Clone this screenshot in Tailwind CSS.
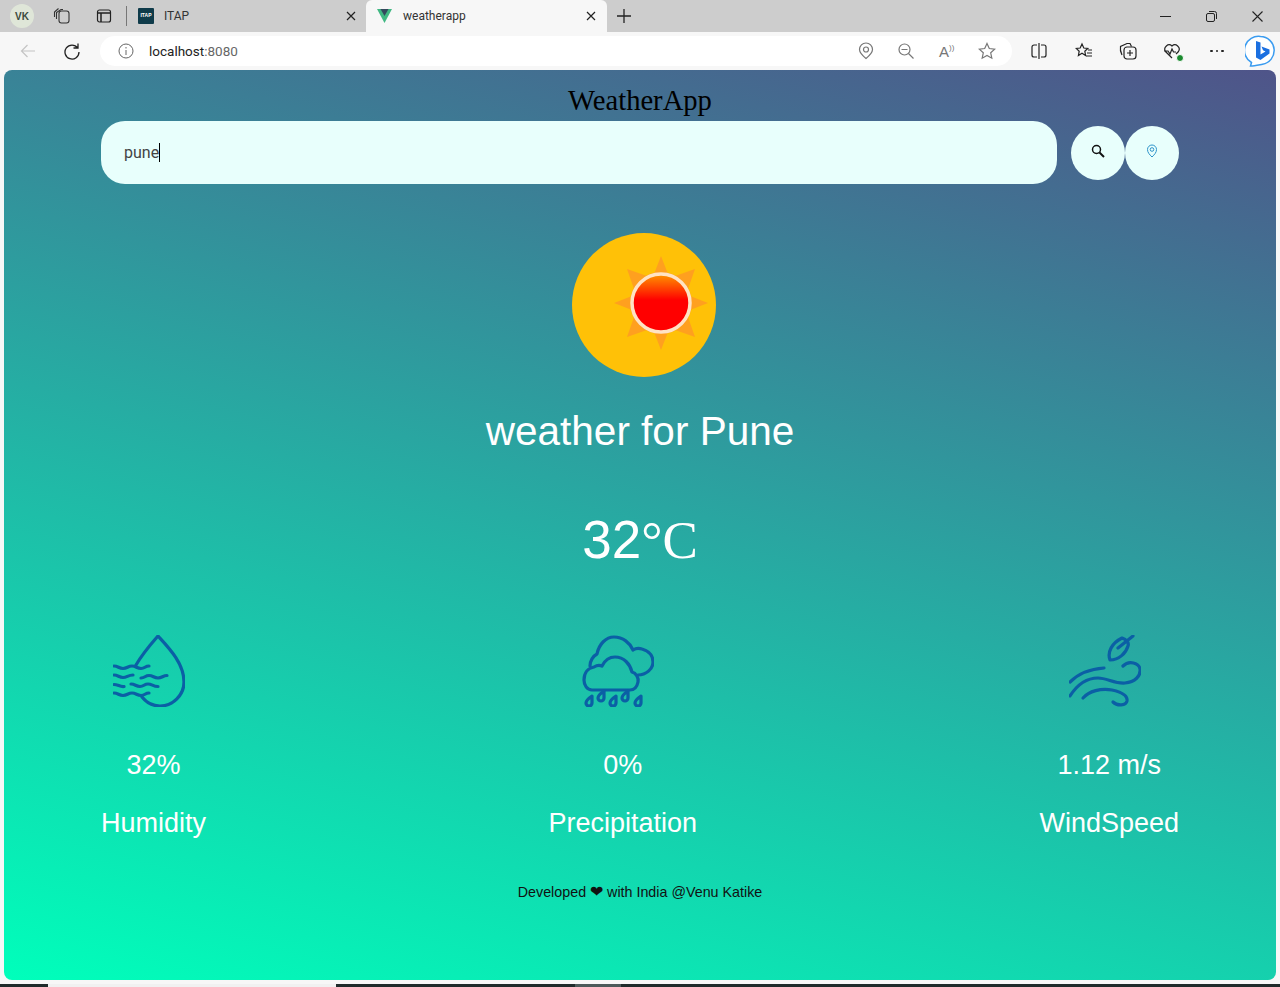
<!DOCTYPE html>
<html lang="en">
<head>
  <meta charset="UTF-8">
  <title>weatherapp</title>
  <script src="https://cdn.jsdelivr.net/npm/@tailwindcss/browser@4"></script>
</head>
<body class="h-[987px] w-[1280px] overflow-hidden bg-[#f7f7f7] font-['Liberation_Sans',sans-serif]">
  <!-- tab strip -->
  <div class="flex h-[32px] items-center bg-[#cdcdcd] text-[#222]">
    <div class="ml-[10px] flex h-[24px] w-[24px] items-center justify-center rounded-full bg-[#dfe6d8] text-[10px] font-bold text-[#3c4a3c]">VK</div>
    <svg class="ml-[19px] h-[18px] w-[18px]" viewBox="0 0 18 18" fill="none" stroke="#333" stroke-width="1.1"><rect x="6" y="4" width="10" height="12" rx="2.5"/><path d="M3.5 12V5.5L8 2.5h2M1.5 10V5l4-3.5"/></svg>
    <svg class="ml-[25px] h-[16px] w-[16px]" viewBox="0 0 16 16" fill="none" stroke="#222" stroke-width="1.2"><rect x="1.5" y="2" width="13" height="12" rx="2"/><path d="M1.5 5h13M5 5v9" stroke-width="1.5"/></svg>
    <div class="ml-[14px] h-[20px] w-px bg-[#777]"></div>
    <div class="ml-[11px] flex h-[16px] w-[16px] items-center justify-center rounded-[1px] bg-[#0f3b4a] text-[5px] font-bold text-white">ITAP</div>
    <span class="ml-[10px] w-[182px] font-['Roboto',sans-serif] text-[12px] text-[#333]">ITAP</span>
    <svg class="h-[10px] w-[10px]" viewBox="0 0 10 10" stroke="#222" stroke-width="1.2"><path d="M1 1l8 8M9 1l-8 8"/></svg>
    <div class="ml-[10px] flex h-[32px] w-[241px] items-center rounded-t-[6px] bg-[#f7f7f7]">
      <svg class="ml-[11px] h-[14px] w-[15px]" viewBox="0 0 15 14"><path d="M0 0h15L7.500 14z" fill="#41b883"/><path d="M3.500 0h8L7.500 7z" fill="#35495e"/></svg>
      <span class="ml-[11px] w-[183px] font-['Roboto',sans-serif] text-[12px] text-[#333]">weatherapp</span>
      <svg class="h-[10px] w-[10px]" viewBox="0 0 10 10" stroke="#222" stroke-width="1.2"><path d="M1 1l8 8M9 1l-8 8"/></svg>
    </div>
    <svg class="ml-[10px] h-[14px] w-[14px]" viewBox="0 0 14 14" stroke="#222" stroke-width="1.3"><path d="M7 0v14M0 7h14"/></svg>
    <div class="ml-auto flex items-center">
      <div class="h-px w-[11px] bg-[#222]"></div>
      <svg class="ml-[35px] h-[11px] w-[11px]" viewBox="0 0 11 11" fill="none" stroke="#222"><rect x=".5" y="2.500" width="8" height="8" rx="1.500"/><path d="M3 .5h5.500a2 2 0 0 1 2 2V8"/></svg>
      <svg class="ml-[35px] mr-[17px] h-[11px] w-[11px]" viewBox="0 0 11 11" stroke="#222" stroke-width="1.1"><path d="M.5.5l10 10M10.500.5l-10 10"/></svg>
    </div>
  </div>
  <!-- address bar -->
  <div class="flex h-[38px] items-center bg-[#f7f7f7]">
    <svg class="ml-[20px] h-[16px] w-[16px]" viewBox="0 0 16 16" fill="none" stroke="#c4c4c4" stroke-width="1.2"><path d="M15 8H1.500M7.500 2l-6 6 6 6"/></svg>
    <svg class="ml-[27px] h-[18px] w-[18px]" viewBox="0 0 18 18" fill="none" stroke="#222" stroke-width="1.3"><path d="M14.700 6A7 7 0 1 0 16 10M15 1.500V6h-4.500"/></svg>
    <div class="ml-[19px] flex h-[30px] w-[912px] items-center rounded-full bg-white">
      <svg class="ml-[18px] h-[16px] w-[16px]" viewBox="0 0 16 16" fill="none" stroke="#666"><circle cx="8" cy="8" r="7"/><path d="M8 7v5M8 4v1.500"/></svg>
      <span class="ml-[15px] font-['Roboto',sans-serif] text-[13.500px] text-[#222]">localhost<span class="text-[#666]">:8080</span></span>
      <div class="ml-auto flex items-center">
        <svg class="h-[18px] w-[18px]" viewBox="0 0 18 18" fill="none" stroke="#777" stroke-width="1.200"><path d="M9 16.500C6 14 2.500 11 2.500 7.500a6.500 6.500 0 0 1 13 0C15.500 11 12 14 9 16.500z"/><circle cx="9" cy="7.500" r="2.500"/></svg>
        <svg class="ml-[23px] h-[16px] w-[16px]" viewBox="0 0 16 16" fill="none" stroke="#777" stroke-width="1.200"><circle cx="6.500" cy="6.500" r="5.500"/><path d="M3.500 6.500h6M10.500 10.500l5 5"/></svg>
        <span class="ml-[25px] w-[16px] text-[15px] leading-none text-[#777]">A<span class="align-top text-[8px]">))</span></span>
        <svg class="ml-[23px] mr-[16px] h-[18px] w-[18px]" viewBox="0 0 18 18" fill="none" stroke="#777" stroke-width="1.200"><path d="M9 1.500l2.300 5 5.400.6-4 3.700 1.100 5.400L9 13.500l-4.800 2.700 1.100-5.400-4-3.700 5.400-.6z"/></svg>
      </div>
    </div>
    <svg class="ml-[19px] h-[16px] w-[16px]" viewBox="0 0 16 16" fill="none" stroke="#222" stroke-width="1.200"><path d="M6 2H3a2 2 0 0 0-2 2v8a2 2 0 0 0 2 2h3M10 2h3a2 2 0 0 1 2 2v8a2 2 0 0 1-2 2h-3M8 0v16"/></svg>
    <svg class="ml-[28px] h-[18px] w-[18px]" viewBox="0 0 18 18" fill="none" stroke="#222" stroke-width="1.200"><path d="M7 2l1.800 4 4 .4-3 2.800.8 4.300L7 11.300l-3.600 2.200.8-4.300-3-2.800 4-.4zM13 8h4M12 11h5M11 14h6"/></svg>
    <svg class="ml-[26px] h-[18px] w-[18px]" viewBox="0 0 18 18" fill="none" stroke="#222" stroke-width="1.200"><rect x="5" y="5" width="12" height="12" rx="3"/><path d="M11 8v6M8 11h6M3 13C1.500 10 1 7 1.500 4.500L8 1.500h3l1.500 3"/></svg>
    <div class="relative ml-[26px] h-[18px] w-[18px]">
      <svg class="h-[18px] w-[18px]" viewBox="0 0 18 18" fill="none" stroke="#222" stroke-width="1.200"><path d="M9 16L2.500 9.500A4.300 4.300 0 0 1 9 4a4.300 4.300 0 0 1 6.500 5.500L13 12M1 9h4l2 3 2-5 1.500 3H13"/></svg>
      <div class="absolute right-[-3px] bottom-[-2px] h-[8px] w-[8px] rounded-full border border-white bg-[#1a8a2e]"></div>
    </div>
    <div class="ml-[29px] flex items-center gap-[3px]">
      <div class="h-[2.500px] w-[2.500px] rounded-full bg-[#222]"></div>
      <div class="h-[2.500px] w-[2.500px] rounded-full bg-[#222]"></div>
      <div class="h-[2.500px] w-[2.500px] rounded-full bg-[#222]"></div>
    </div>
    <svg class="ml-[21px] h-[32px] w-[31px]" viewBox="0 0 31 32"><path d="M15.500 1.500a14 14 0 0 1 2 27.800c-3 .5-8 1.700-12 1.700l1-3.500A14 14 0 0 1 15.500 1.500z" fill="#fff" stroke="#3b9cf0" stroke-width="1.500"/><path d="M11 6l4.500 1.500v12l5-3-2.500-1.200-1.500-3.800 8 3v4L15.500 25 11 22.500z" fill="#1b6fe0"/></svg>
  </div>
  <!-- page viewport -->
  <div class="mx-[4px] flex h-[910px] w-[1272px] flex-col items-center overflow-hidden rounded-[8px] bg-[linear-gradient(15deg,#00ffbb,#4f5489)]">
    <h1 class="mt-[15px] h-[36px] font-['Liberation_Serif',serif] text-[28.600px] leading-[32px] text-black">WeatherApp</h1>
    <div class="flex h-[63px] w-[1078px]">
      <div class="flex h-[63px] w-[956px] items-center rounded-[24px] bg-[#e8fffc] pl-[23px] font-['Roboto',sans-serif] text-[16px] text-[#444]">pune<span class="h-[19px] w-px bg-black"></span></div>
      <div class="ml-[14px] mt-[5px] flex h-[54px] w-[54px] items-center justify-center rounded-full bg-[#e8fffc] pb-[4px]">
        <svg class="h-[14px] w-[14px]" viewBox="0 0 14 14" fill="none" stroke="#111" stroke-width="1.500"><circle cx="5.500" cy="5.500" r="4"/><path d="M8.500 8.500l4.500 4.500" stroke-width="2"/></svg>
      </div>
      <div class="mt-[5px] flex h-[54px] w-[54px] items-center justify-center rounded-full bg-[#e8fffc] pb-[4px]">
        <svg class="h-[14px] w-[14px]" viewBox="0 0 14 14" fill="none" stroke="#2c92c9"><path d="M7 13C4.500 10.500 2.500 8.500 2.500 5.500a4.500 4.500 0 0 1 9 0C11.500 8.500 9.500 10.500 7 13z"/><circle cx="7" cy="5.500" r="1.800"/></svg>
      </div>
    </div>
    <!-- sun -->
    <div class="ml-[8px] mt-[49px] flex h-[144px] w-[144px] items-center justify-center rounded-full bg-[#ffc107]">
      <svg class="mb-[5px] ml-[34px] h-[96px] w-[96px] blur-[0.6px]" viewBox="0 0 96 96">
        <defs><linearGradient id="sunFill" x1="0" y1="0" x2="0" y2="1"><stop offset="0" stop-color="#ff9500"/><stop offset=".45" stop-color="#ff0000"/><stop offset="1" stop-color="#ff0000"/></linearGradient></defs>
        <path d="M48 1l7 18H41zM48 95l-7-18h14zM1 48l18-7v14zM95 48l-18 7V41zM14 14l20 7-13 13zM82 14l-7 20-13-13zM14 82l7-20 13 13zM82 82l-20-7 13-13z" fill="#ffa01f"/>
        <circle cx="48" cy="48" r="31" fill="#ffa01f"/>
        <circle cx="48" cy="48" r="29" fill="url(#sunFill)" stroke="#ffe3c4" stroke-width="3.500"/>
      </svg>
    </div>
    <div class="mt-[30px] text-[40.500px] leading-[48px] text-white">weather for Pune</div>
    <div class="mt-[53px] text-[53px] leading-[64px] text-white">32<span class="font-['Liberation_Serif',serif]">°C</span></div>
    <!-- stats -->
    <div class="mt-[63px] flex w-[1078px] justify-between text-center text-white">
      <div class="flex flex-col items-center">
        <svg class="mr-[9px] h-[72px] w-[72px]" viewBox="0 0 72 72" fill="none" stroke="#0b5fa5" stroke-width="3.200" stroke-linecap="round"><path d="M23 30C30 18 38 9 45 1C55 12 71 28 71 47C71 60 60 71 47 71C39 71 33 67 29 62"/><path d="M1 31c4 0 5 2.500 9 2.500s5-2.500 9-2.500 5 2.500 9 2.500 4-2.500 8-2.500M1 40c4 0 5 2.500 9 2.500S15 40 20 40M28 43c4 0 4-2.500 8-2.500s5 2.500 9 2.500 5-2.500 9-2.500M1 49.500c4 0 6 2.500 10 2M18 49c4 0 5 2.500 9 2.500s4-2.500 8-2.500 5 2.500 10 2.500M1 58c4 0 5 2.500 9 2.500s5-2.500 9-2.500 5 2.500 9 2.500 4-2.500 8-2.500"/></svg>
        <div class="mt-[42px] text-[27px] leading-[32px]">32%</div>
        <div class="mt-[26px] text-[27px] leading-[33px]">Humidity</div>
      </div>
      <div class="flex flex-col items-center">
        <svg class="mr-[9px] h-[72px] w-[72px]" viewBox="0 0 72 72" fill="none" stroke="#0b5fa5" stroke-width="3.200" stroke-linecap="round" stroke-linejoin="round"><path d="M8 31C8 26 11 21 15 19C17 9 24 2 32 2C41 2 48 8 51 15C54 13 57 13 60 14C67 16 71 21 71 27C71 34 64 40 56 40"/><path d="M10 55C5 55 2 50 2 45C2 38 6 33 12 32C15 30 18 30 20 31C23 25 28 22 33 22C42 22 48 29 50 37C54 38 57 43 56 47C55 52 52 55 48 55z"/><path d="M10 61c-3 2-6 5-6 7a3 3 0 0 0 6 0c0-2 0-5 0-7zM22 56c-3 2-6 5-6 7a3 3 0 0 0 6 0c0-2 0-5 0-7zM34 61c-3 2-6 5-6 7a3 3 0 0 0 6 0c0-2 0-5 0-7zM46 56c-3 2-6 5-6 7a3 3 0 0 0 6 0c0-2 0-5 0-7zM59 61c-3 2-6 5-6 7a3 3 0 0 0 6 0c0-2 0-5 0-7z"/></svg>
        <div class="mt-[42px] text-[27px] leading-[32px]">0%</div>
        <div class="mt-[26px] text-[27px] leading-[33px]">Precipitation</div>
      </div>
      <div class="flex flex-col items-center">
        <svg class="mr-[9px] h-[72px] w-[72px]" viewBox="0 0 72 72" fill="none" stroke="#0b5fa5" stroke-width="3.200" stroke-linecap="round" stroke-linejoin="round"><path d="M1 47C10 38 21 34 35 33"/><path d="M1 61C8 50 18 43 29 43C38 43 46 49 56 48C66 47 72 41 71 34C70 28 60 25 54 31"/><path d="M14 63C20 56 32 53 43 55C52 57 59 60 58 66C57 71 48 71 44 67"/><path d="M41 25C38 17 43 8 53 3C58 5 60 8 59 11C57 18 50 25 41 25zM49 13L64 1"/></svg>
        <div class="mt-[42px] text-[27px] leading-[32px]">1.12 m/s</div>
        <div class="mt-[26px] text-[27px] leading-[33px]">WindSpeed</div>
      </div>
    </div>
    <div class="mt-[44px] text-[14.300px] leading-[16px] text-[#111]">Developed <span class="text-[16px] leading-[16px]">❤</span> with India @Venu Katike</div>
  </div>
  <!-- taskbar edge -->
  <div class="mt-[4px] flex h-[3px] bg-[#1f2b2b]">
    <div class="ml-[48px] h-[3px] w-[288px] bg-[#f1f1f1]"></div>
    <div class="ml-[239px] h-[3px] w-[46px] bg-[#4c5a5a]"></div>
  </div>
</body>
</html>
